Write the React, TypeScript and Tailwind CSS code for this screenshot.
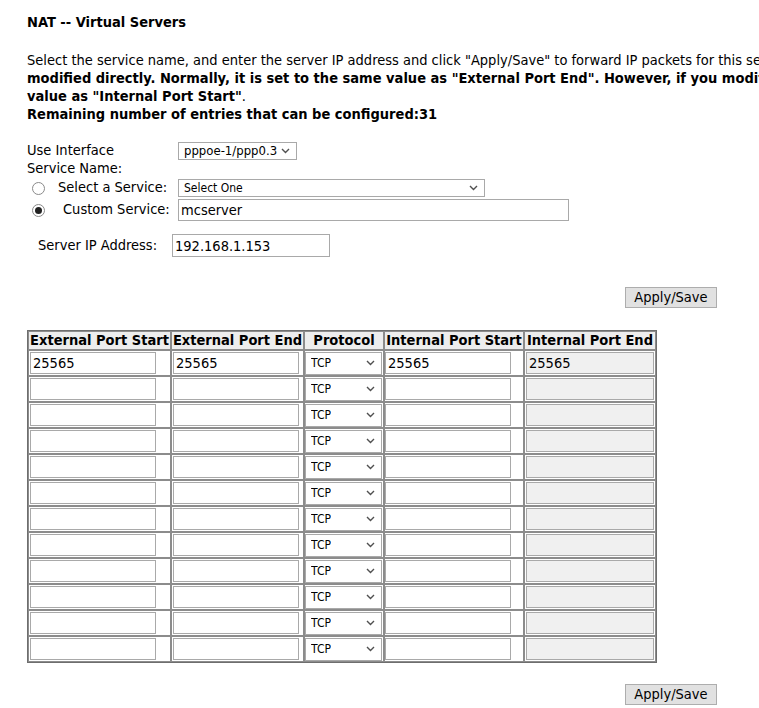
import React from "react";

const font = { fontFamily: '"DejaVu Sans Condensed", "DejaVu Sans", Tahoma, sans-serif' };

function Chevron() {
  return (
    <svg width="9" height="6" viewBox="0 0 9 6" className="shrink-0">
      <path d="M1 1 L4.5 4.5 L8 1" fill="none" stroke="#505050" strokeWidth="1.4" />
    </svg>
  );
}

function FakeSelect({ value, className, text = "text-[12px]" }: { value: string; className: string; text?: string }) {
  return (
    <div
      className={`flex items-center justify-between border border-[#a9a9a9] bg-white pl-[5px] pr-[6px] ${text} text-black ${className}`}
    >
      <span className="truncate">{value}</span>
      <Chevron />
    </div>
  );
}

function Radio({ checked }: { checked?: boolean }) {
  return (
    <span className="flex h-[13px] w-[13px] items-center justify-center rounded-full border border-[#8a8a8a] bg-white">
      {checked && <span className="h-[7px] w-[7px] rounded-full bg-[#222]" />}
    </span>
  );
}

function PortInput({ value = "", disabled }: { value?: string; disabled?: boolean }) {
  return (
    <input
      readOnly
      value={value}
      style={font}
      className={`block h-[22px] border border-[#a9a9a9] px-[2px] text-[14.5px] text-black outline-none ${
        disabled ? "w-full bg-[#f0f0f0]" : "w-[126px] bg-white"
      }`}
    />
  );
}

function ApplyButton() {
  return (
    <button
      style={font}
      className="h-[21px] w-[92px] border border-[#adadad] bg-[#e1e1e1] text-[14.5px] leading-none text-black"
    >
      Apply/Save
    </button>
  );
}

const rows = Array.from({ length: 12 }, (_, i) => i);

export default function App() {
  return (
    <div style={font} className="h-[708px] w-[759px] overflow-hidden bg-white pl-[27px] pt-[13px] text-[14.5px] text-black">
      <div className="h-[18px] font-bold leading-[18px]">NAT -- Virtual Servers</div>

      <div className="mt-[20px] whitespace-nowrap leading-[18px]">
        <div>
          Select the service name, and enter the server IP address and click "Apply/Save" to forward IP packets for this
          service to the specified server. <b>NOTE: The "Internal Port End" cannot be</b>
        </div>
        <div>
          <b>
            modified directly. Normally, it is set to the same value as "External Port End". However, if you modify
            "Internal Port Start", then "Internal Port End" will be set to the same
          </b>
        </div>
        <div>
          <b>value as "Internal Port Start"</b>.
        </div>
        <div className="font-bold">Remaining number of entries that can be configured:31</div>
      </div>

      <div className="mt-[19px] flex h-[18px] items-center">
        <span className="w-[151px]">Use Interface</span>
        <FakeSelect value="pppoe-1/ppp0.3" text="text-[13px]" className="h-[18px] w-[119px]" />
      </div>
      <div className="flex h-[18px] items-center">Service Name:</div>

      <div className="mt-[1px] flex h-[18px] items-center">
        <span className="ml-[5px] w-[26px]">
          <Radio />
        </span>
        <span className="w-[120px]">Select a Service:</span>
        <FakeSelect value="Select One" className="h-[18px] w-[307px]" />
      </div>

      <div className="mt-[2px] flex h-[22px] items-center">
        <span className="ml-[5px] w-[31px]">
          <Radio checked />
        </span>
        <span className="w-[115px]">Custom Service:</span>
        <input
          readOnly
          value="mcserver"
          style={font}
          className="h-[22px] w-[391px] border border-[#a9a9a9] px-[2px] text-[14.5px] outline-none"
        />
      </div>

      <div className="mt-[13px] flex h-[23px] items-center">
        <span className="ml-[11px] w-[134px]">Server IP Address:</span>
        <input
          readOnly
          value="192.168.1.153"
          style={font}
          className="h-[23px] w-[158px] border border-[#a9a9a9] px-[2px] text-[14.5px] outline-none"
        />
      </div>

      <div className="ml-[598px] mt-[30px]">
        <ApplyButton />
      </div>

      <table className="mt-[21px] table-fixed border-separate border-spacing-0 border border-[#6e6e6e]">
        <colgroup>
          <col className="w-[143px]" />
          <col className="w-[133px]" />
          <col className="w-[80px]" />
          <col className="w-[140px]" />
          <col className="w-[132px]" />
        </colgroup>
        <thead>
          <tr className="h-[19px] bg-[#ededed]">
            {["External Port Start", "External Port End", "Protocol", "Internal Port Start", "Internal Port End"].map(
              (h) => (
                <th
                  key={h}
                  className="whitespace-nowrap border border-[#8c8c8c] p-0 text-center text-[14.5px] font-bold leading-[17px]"
                >
                  {h}
                </th>
              )
            )}
          </tr>
        </thead>
        <tbody>
          {rows.map((i) => (
            <tr key={i} className="h-[26px]">
              <td className="border border-[#8c8c8c] p-[1px]">
                <PortInput value={i === 0 ? "25565" : ""} />
              </td>
              <td className="border border-[#8c8c8c] p-[1px]">
                <PortInput value={i === 0 ? "25565" : ""} />
              </td>
              <td className="border border-[#8c8c8c] p-0">
                <FakeSelect value="TCP" className="h-[23px] w-[77px]" />
              </td>
              <td className="border border-[#8c8c8c] p-0 pr-[1px]">
                <PortInput value={i === 0 ? "25565" : ""} />
              </td>
              <td className="border border-[#8c8c8c] p-[1px]">
                <PortInput value={i === 0 ? "25565" : ""} disabled />
              </td>
            </tr>
          ))}
        </tbody>
      </table>

      <div className="ml-[598px] mt-[21px]">
        <ApplyButton />
      </div>
    </div>
  );
}
